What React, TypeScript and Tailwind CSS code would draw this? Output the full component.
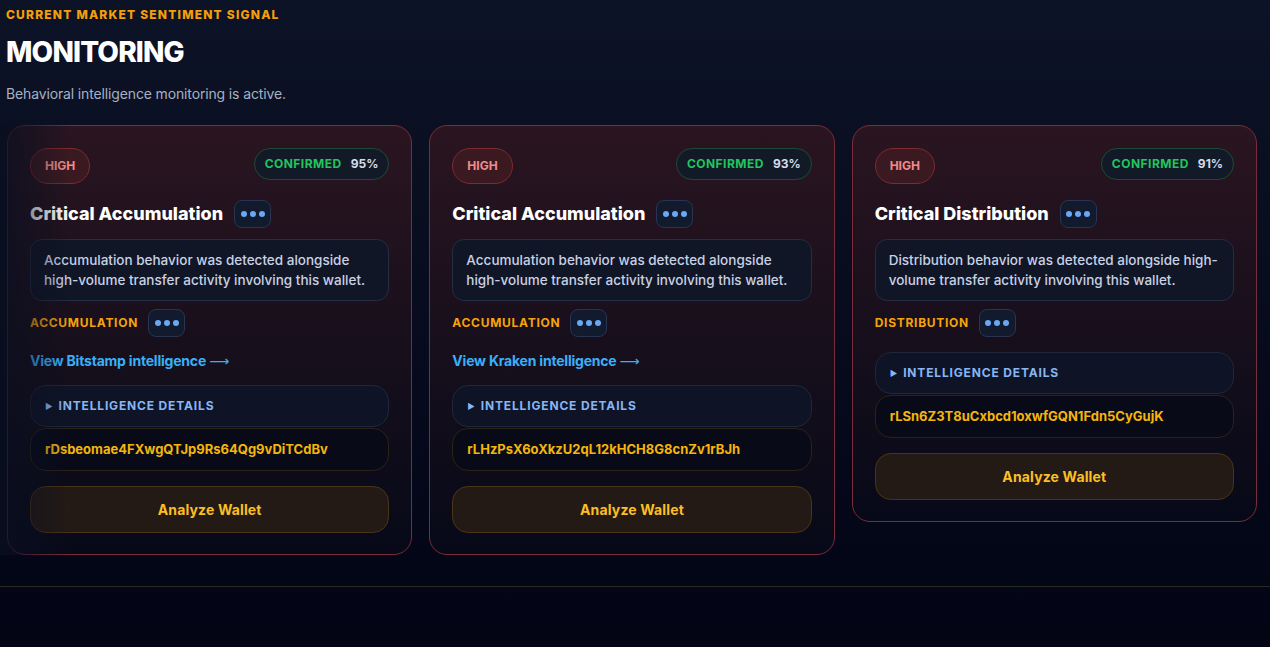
import React from "react";

const FONT = "font-['Inter','Liberation_Sans',Arial,sans-serif]";

type Signal = {
  kind: string;
  title: string;
  text: string;
  confidence: number;
  exchange?: string;
  wallet: string;
};

const SIGNALS: Signal[] = [
  {
    kind: "ACCUMULATION",
    title: "Critical Accumulation",
    text: "Accumulation behavior was detected alongside high-volume transfer activity involving this wallet.",
    confidence: 95,
    exchange: "Bitstamp",
    wallet: "rDsbeomae4FXwgQTJp9Rs64Qg9vDiTCdBv",
  },
  {
    kind: "ACCUMULATION",
    title: "Critical Accumulation",
    text: "Accumulation behavior was detected alongside high-volume transfer activity involving this wallet.",
    confidence: 93,
    exchange: "Kraken",
    wallet: "rLHzPsX6oXkzU2qL12kHCH8G8cnZv1rBJh",
  },
  {
    kind: "DISTRIBUTION",
    title: "Critical Distribution",
    text: "Distribution behavior was detected alongside high-volume transfer activity involving this wallet.",
    confidence: 91,
    wallet: "rLSn6Z3T8uCxbcd1oxwfGQN1Fdn5CyGujK",
  },
];

function Dots() {
  return (
    <button
      type="button"
      className="flex h-[28px] w-[37px] items-center justify-center gap-[3px] rounded-lg border border-[#2a3450] bg-[#121a2e]"
    >
      <span className="h-[6px] w-[6px] rounded-full bg-[#6aa8f5]" />
      <span className="h-[6px] w-[6px] rounded-full bg-[#6aa8f5]" />
      <span className="h-[6px] w-[6px] rounded-full bg-[#6aa8f5]" />
    </button>
  );
}

function SignalCard({ s }: { s: Signal }) {
  return (
    <div className="rounded-[18px] border border-[#7a2c3a] bg-gradient-to-b from-[#2a1520] via-[#180f1c] to-[#070918] px-[22px] pt-[22px] pb-[21px]">
      <div className="flex items-start justify-between">
        <span className="flex h-[36px] items-center rounded-full border border-[#7d2a30] bg-[#3a1a20] px-[14px] text-[12px] font-bold text-[#f28b8b]">
          HIGH
        </span>
        <span className="flex h-[32px] items-center gap-[9px] rounded-full border border-[#1e4a35] bg-[#121a28] px-[10px] text-[12px] font-bold">
          <span className="tracking-[0.04em] text-[#22c55e]">CONFIRMED</span>
          <span className="text-[#d5dcec]">{s.confidence}%</span>
        </span>
      </div>

      <div className="mt-[16px] flex items-center gap-[11px]">
        <h2 className="text-[18px] leading-[28px] font-extrabold text-white">{s.title}</h2>
        <Dots />
      </div>

      <p className="mt-[11px] rounded-xl border border-[#252d42] bg-[#101626] px-[13px] py-[10px] text-[13.5px] leading-[20px] font-medium text-[#c9d1e4]">
        {s.text}
      </p>

      <div className="mt-[8px] flex items-center gap-[10px]">
        <span className="text-[12px] font-bold tracking-[0.06em] text-[#f5a30b]">{s.kind}</span>
        <Dots />
      </div>

      {s.exchange && (
        <a className="mt-[15px] block text-[14px] leading-[18px] font-bold tracking-[-0.015em] text-[#38b0f8]">
          View {s.exchange} intelligence <span className="font-['DejaVu_Sans',sans-serif] font-normal">⟶</span>
        </a>
      )}

      <div className="mt-[15px]">
        <div className="flex h-[42px] items-center gap-[5px] rounded-2xl border border-[#1f273a] bg-[#0e1326] px-[14px] text-[12px] font-bold tracking-[0.07em] text-[#86b6f4]">
          <span className="text-[8px]">▶</span>
          INTELLIGENCE DETAILS
        </div>
        <div className="mt-px flex h-[43px] items-center rounded-2xl border border-[#2a2318] bg-[#080a18] px-[14px] text-[13px] font-bold text-[#f5b60c]">
          {s.wallet}
        </div>
      </div>

      <button
        type="button"
        className="mt-[15px] h-[47px] w-full rounded-2xl border border-[#4a3416] bg-[#241a15] text-[14px] font-bold tracking-[0.01em] text-[#fbbf24]"
      >
        Analyze Wallet
      </button>
    </div>
  );
}

export default function App() {
  return (
    <div className={`${FONT} min-h-[647px] bg-gradient-to-b from-[#0d1326] to-[#030515]`}>
      <div className="px-[6px] pt-[6px]">
        <p className="text-[12px] font-extrabold tracking-[0.1em] text-[#f59e0b]">CURRENT MARKET SENTIMENT SIGNAL</p>
        <h1 className="mt-[11px] text-[28px] leading-[34px] font-extrabold tracking-[-0.03em] text-white">MONITORING</h1>
        <p className="mt-[14px] text-[14px] tracking-[-0.01em] text-[#a6b0c4]">Behavioral intelligence monitoring is active.</p>
      </div>

      <div className="relative mt-[21px] grid grid-cols-3 items-start gap-[17px] pr-[13px] pl-[7px]">
        {SIGNALS.map((s, i) => (
          <SignalCard key={i} s={s} />
        ))}
        <div className="pointer-events-none absolute top-0 bottom-0 left-0 w-[70px] bg-gradient-to-r from-[#0a0f20] to-transparent opacity-80" />
      </div>

      <div className="mt-[31px] border-t border-[#2a2a22]" />
    </div>
  );
}
